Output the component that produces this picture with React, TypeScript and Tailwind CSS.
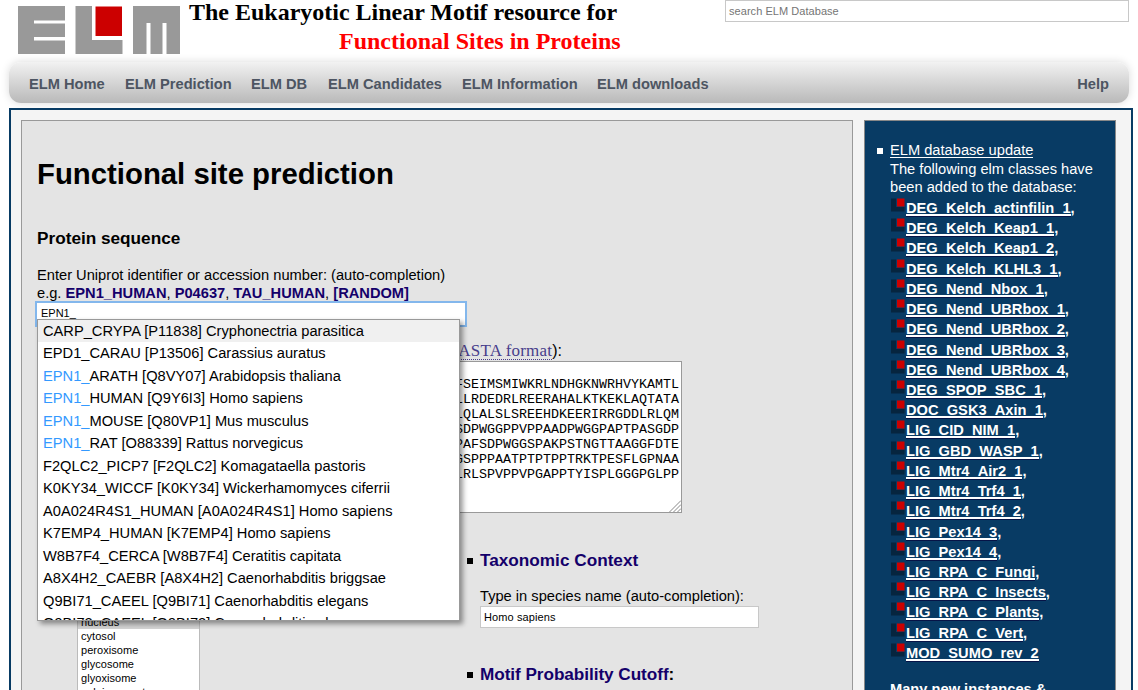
import React from "react";

const nav = [
  { label: "ELM Home", w: "w-[96px]" },
  { label: "ELM Prediction", w: "w-[126px]" },
  { label: "ELM DB", w: "w-[77px]" },
  { label: "ELM Candidates", w: "w-[134px]" },
  { label: "ELM Information", w: "w-[135px]" },
  { label: "ELM downloads", w: "w-[130px]" },
];

const suggestions = [
  ["", "CARP_CRYPA [P11838] Cryphonectria parasitica"],
  ["", "EPD1_CARAU [P13506] Carassius auratus"],
  ["EPN1_", "ARATH [Q8VY07] Arabidopsis thaliana"],
  ["EPN1_", "HUMAN [Q9Y6I3] Homo sapiens"],
  ["EPN1_", "MOUSE [Q80VP1] Mus musculus"],
  ["EPN1_", "RAT [O88339] Rattus norvegicus"],
  ["", "F2QLC2_PICP7 [F2QLC2] Komagataella pastoris"],
  ["", "K0KY34_WICCF [K0KY34] Wickerhamomyces ciferrii"],
  ["", "A0A024R4S1_HUMAN [A0A024R4S1] Homo sapiens"],
  ["", "K7EMP4_HUMAN [K7EMP4] Homo sapiens"],
  ["", "W8B7F4_CERCA [W8B7F4] Ceratitis capitata"],
  ["", "A8X4H2_CAEBR [A8X4H2] Caenorhabditis briggsae"],
  ["", "Q9BI71_CAEEL [Q9BI71] Caenorhabditis elegans"],
  ["", "Q9BI72_CAEEL [Q9BI72] Caenorhabditis elegans"],
];

const sequence = [
  "FSEIMSMIWKRLNDHGKNWRHVYKAMTL",
  "LLRDEDRLREERAHALKTKEKLAQTATA",
  "LQLALSLSREEHDKEERIRRGDDLRLQM",
  "SDPWGGPPVPPAADPWGGPAPTPASGDP",
  "PAFSDPWGGSPAKPSTNGTTAAGGFDTE",
  "GSPPPAATPTPTPPTRKTPESFLGPNAA",
  "LRLSPVPPVPGAPPTYISPLGGGPGLPP",
];

const classes = [
  "DEG_Kelch_actinfilin_1",
  "DEG_Kelch_Keap1_1",
  "DEG_Kelch_Keap1_2",
  "DEG_Kelch_KLHL3_1",
  "DEG_Nend_Nbox_1",
  "DEG_Nend_UBRbox_1",
  "DEG_Nend_UBRbox_2",
  "DEG_Nend_UBRbox_3",
  "DEG_Nend_UBRbox_4",
  "DEG_SPOP_SBC_1",
  "DOC_GSK3_Axin_1",
  "LIG_CID_NIM_1",
  "LIG_GBD_WASP_1",
  "LIG_Mtr4_Air2_1",
  "LIG_Mtr4_Trf4_1",
  "LIG_Mtr4_Trf4_2",
  "LIG_Pex14_3",
  "LIG_Pex14_4",
  "LIG_RPA_C_Fungi",
  "LIG_RPA_C_Insects",
  "LIG_RPA_C_Plants",
  "LIG_RPA_C_Vert",
  "MOD_SUMO_rev_2",
];

const compartments = ["nucleus", "cytosol", "peroxisome", "glycosome", "glyoxisome", "golgi apparatus"];

function Logo() {
  return (
    <svg width="162" height="48" viewBox="0 0 162 48" className="shrink-0">
      <path fill="#999" d="M0 0H47V14.5H16V17.5H47V31H16V34.5H47V48H0Z" />
      <path fill="#999" d="M57.5 0H74V34H104.500V48H57.500Z" />
      <path fill="#c00" d="M77.500 0.500H104V30H77.500Z" />
      <path fill="#999" d="M115 0H162V48H148.500V17H144.500V48H132.500V17H128.500V48H115Z" />
    </svg>
  );
}

function ElmMark() {
  return (
    <svg width="14" height="14" viewBox="0 0 14 14" className="mt-px ml-px shrink-0">
      <path fill="#06253f" d="M0 0.500H5V9H13.500V13.500H0Z" />
      <path fill="#c00" d="M6 0.500H13.500V8.500H6Z" />
    </svg>
  );
}

function Link({ children }: { children: React.ReactNode }) {
  return <b className="text-[#14006a]">{children}</b>;
}

function Header() {
  return (
    <header className="flex h-[62px] items-start pl-[18px]">
      <div className="pt-[6px]"><Logo /></div>
      <div className="ml-[9px] w-[432px] font-['Liberation_Serif',serif] text-[24px] leading-[29px] font-bold whitespace-nowrap">
        <div className="-mt-[2px] tracking-[-0.01px]">The Eukaryotic Linear Motif resource for</div>
        <div className="pl-[150px] text-[#f00]">Functional Sites in Proteins</div>
      </div>
      <div className="ml-[104px] h-[22px] w-[404px] border border-[#c8c8c8] bg-white pl-[3px] text-[11px] leading-[20px] tracking-[0.05px] text-[#757575]">
        search ELM Database
      </div>
    </header>
  );
}

function NavBar() {
  return (
    <nav className="mr-[9px] ml-[9px] flex h-[41px] rounded-[12px] bg-linear-to-b from-[#f2f2f2] to-[#b9b9b9] pr-[20px] pl-[20px] text-[14.667px] leading-[45px] font-bold text-[#4d5562] shadow-[0_0_8px_rgba(0,0,0,0.15)]">
      {nav.map((n) => (
        <span key={n.label} className={"shrink-0 whitespace-nowrap " + n.w}>{n.label}</span>
      ))}
      <span className="ml-auto">Help</span>
    </nav>
  );
}

function Suggestions() {
  return (
    <div className="absolute top-[16px] left-0 z-10 h-[302px] w-[423px] overflow-hidden border border-[#999] bg-white text-[14.667px] shadow-[3px_3px_5px_rgba(0,0,0,0.4)]">
      {suggestions.map(([hit, rest], i) => (
        <div key={rest} className={"h-[22.47px] pl-[5px] leading-[22px] whitespace-nowrap " + (i === 0 ? "bg-[#f0f0f0]" : "")}>
          <span className="text-[#3399ff]">{hit}</span>{rest}
        </div>
      ))}
    </div>
  );
}

function Predictor() {
  return (
    <main className="h-[600px] w-[832px] border border-[#999] bg-[#e4e4e4] pl-[15px]">
      <h1 className="pt-[35px] text-[29.333px] leading-[36px] font-bold">Functional site prediction</h1>
      <h2 className="mt-[35px] text-[17.2px] leading-[22px] font-bold">Protein sequence</h2>
      <p className="mt-[17px] text-[14.667px] leading-[18px]">
        Enter Uniprot identifier or accession number: (auto-completion)<br />
        e.g. <Link>EPN1_HUMAN</Link>, <Link>P04637</Link>, <Link>TAU_HUMAN</Link>, <Link>[RANDOM]</Link>
      </p>
      <div className="relative mt-px h-[22px] w-[428px] bg-white pl-[4px] text-[11px] leading-[21px] shadow-[0_0_0_2px_#83b7ec]">
        EPN1_
        <Suggestions />
      </div>
      <div className="mt-[16px] flex h-[20px] w-[525px] justify-end text-[16px] leading-[19px]">
        <span className="h-[19px] border-b border-dotted border-[#483d8b] font-['Liberation_Serif',serif] text-[17px] tracking-[0.2px] text-[#483d8b]">FASTA format</span>):
      </div>
      <div className="relative h-[152px] w-[645px] border border-[#999] bg-white pt-[15px] pr-[2px] text-right font-['Liberation_Mono',monospace] text-[13.333px] leading-[15px]">
        {sequence.map((s) => <div key={s}>{s}</div>)}
        <svg width="12" height="12" viewBox="0 0 12 12" className="absolute right-0 bottom-0" stroke="#888" fill="none">
          <path d="M0.500 12L12 0.500M4.500 12L12 4.500M8.500 12L12 8.500" />
        </svg>
      </div>
      <div className="flex">
        <div className="w-[430px] pt-[101px] pl-[40px]">
          <div className="h-[100px] w-[123px] border border-[#bbb] bg-white text-[11px] leading-[14px] tracking-[0.05px]">
            {compartments.map((c, i) => (
              <div key={c} className={"pl-[3px] " + (i === 0 ? "bg-[#d4d4d4]" : "")}>{c}</div>
            ))}
          </div>
        </div>
        <ul className="pt-[37px]">
          <li className="flex">
            <i className="mt-[8px] mr-[7px] size-[6px] bg-black" />
            <div>
              <h2 className="text-[17.2px] leading-[21px] font-bold text-[#14006a]">Taxonomic Context</h2>
              <p className="mt-[16px] text-[14.667px] leading-[18px]">Type in species name (auto-completion):</p>
              <div className="mt-[1px] h-[22px] w-[279px] border border-[#c8c8c8] bg-white pl-[3px] text-[11px] leading-[20px] tracking-[0.1px]">Homo sapiens</div>
            </div>
          </li>
          <li className="mt-[36px] flex">
            <i className="mt-[8px] mr-[7px] size-[6px] bg-black" />
            <h2 className="text-[17.2px] leading-[21px] font-bold tracking-[-0.06px]"><Link>Motif Probability Cutoff</Link>:</h2>
          </li>
        </ul>
      </div>
    </main>
  );
}

function News() {
  return (
    <aside className="ml-[11px] flex h-[600px] w-[252px] border border-[#888] bg-[#083b64] pt-[20px] pl-[12px] text-[14.667px] leading-[18px] text-white">
      <i className="mt-[7px] mr-[7px] size-[6px] shrink-0 bg-white" />
      <div className="whitespace-nowrap">
        <div className="h-[19px]"><span className="inline-block h-[17px] border-b border-white">ELM database update</span></div>
        The following elm classes have<br />been added to the database:
        <div className="pt-px">
          {classes.map((c, i) => (
            <div key={c} className="flex h-[20.23px]">
              <ElmMark />
              <b className="ml-px h-[19px] border-b-2 border-white leading-[22px] [box-shadow:0_1px_0_#061447]">{c}</b>
              <b className="leading-[22px]">{i < classes.length - 1 ? "," : ""}</b>
            </div>
          ))}
        </div>
        <b className="mt-[18px] block">Many new instances &amp;</b>
      </div>
    </aside>
  );
}

export default function App() {
  return (
    <div className="h-[690px] w-[1138px] overflow-hidden bg-white font-['Liberation_Sans',Arial,sans-serif] text-black">
      <Header />
      <NavBar />
      <div className="mt-[5px] ml-[9px] flex h-[620px] w-[1124px] border-2 border-[#083b64] bg-[#f4f4f4] pt-[10px] pl-[10px]">
        <Predictor />
        <News />
      </div>
    </div>
  );
}
